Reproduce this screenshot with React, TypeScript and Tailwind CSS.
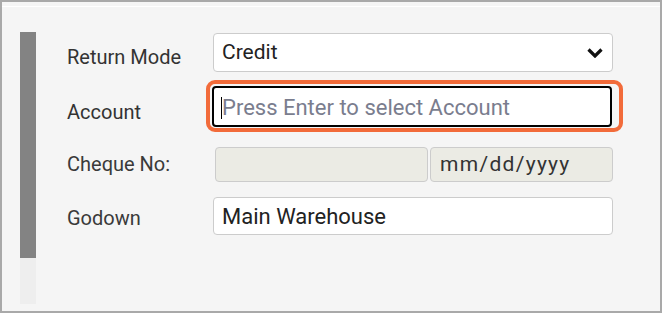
import React from "react";

export default function App() {
  const font = { fontFamily: "Roboto, 'Liberation Sans', sans-serif" };
  return (
    <div
      className="relative w-[662px] h-[313px] border-2 border-[#a9a9a9] bg-[#f5f5f5] overflow-hidden"
      style={font}
    >
      <div className="h-[1px] mt-[4px] bg-white" />
      <div className="flex pl-[18px] pt-[25px]">
        {/* left bar */}
        <div className="flex flex-col w-[16px]">
          <div className="h-[226px] bg-[#838383]" />
          <div className="h-[46px] bg-[#eeeeee]" />
        </div>
        {/* form */}
        <div className="flex flex-col ml-[31px] mt-[1px]">
          {/* Return Mode */}
          <div className="flex items-start h-[39px]">
            <div className="w-[146px] mt-[12px] text-[20px] leading-[24px] text-[#333]">Return Mode</div>
            <div className="flex items-center justify-between w-[400px] h-[39px] bg-white border border-[#cccccc] rounded-[4px] pl-[8px] pr-[9px]">
              <span className="text-[21px] text-[#222]">Credit</span>
              <svg width="16" height="10" viewBox="0 0 16 10">
                <polyline points="1.5,1.5 8,8 14.5,1.5" fill="none" stroke="#111" strokeWidth="3.2" />
              </svg>
            </div>
          </div>
          {/* Account */}
          <div className="flex items-start h-[40px] mt-[14px]">
            <div className="w-[145px] mt-[14px] text-[20px] leading-[24px] text-[#333]">Account</div>
            <div className="flex items-center w-[400px] h-[41px] bg-white border-2 border-black rounded-[4px] pl-[7px] pt-[2px]">
              <span className="w-[1px] h-[22px] bg-black" />
              <span className="text-[22px] text-[#7a7d8e]">Press Enter to select Account</span>
            </div>
          </div>
          {/* Cheque No */}
          <div className="flex items-start h-[35px] mt-[21px]">
            <div className="w-[148px] mt-[5px] text-[20px] leading-[24px] text-[#3a3a3a]">Cheque No:</div>
            <div className="w-[213px] h-[35px] bg-[#ebebe4] border border-[#cccccc] rounded-[4px]" />
            <div className="flex items-center w-[183px] h-[35px] ml-[2px] bg-[#ebebe4] border border-[#cccccc] rounded-[4px] pl-[9px]">
              <span className="text-[21px] text-[#333] tracking-[1.3px]">mm/dd/yyyy</span>
            </div>
          </div>
          {/* Godown */}
          <div className="flex items-start h-[38px] mt-[15px]">
            <div className="w-[146px] mt-[9px] text-[20px] leading-[24px] text-[#3a3a3a]">Godown</div>
            <div className="flex items-center w-[400px] h-[38px] bg-white border border-[#cccccc] rounded-[4px] pl-[8px]">
              <span className="text-[22px] text-[#222]">Main Warehouse</span>
            </div>
          </div>
        </div>
      </div>
      {/* orange highlight */}
      <div className="absolute left-[204px] top-[78px] w-[417px] h-[52px] border-4 border-[#f26b3a] rounded-[9px]" />
    </div>
  );
}
